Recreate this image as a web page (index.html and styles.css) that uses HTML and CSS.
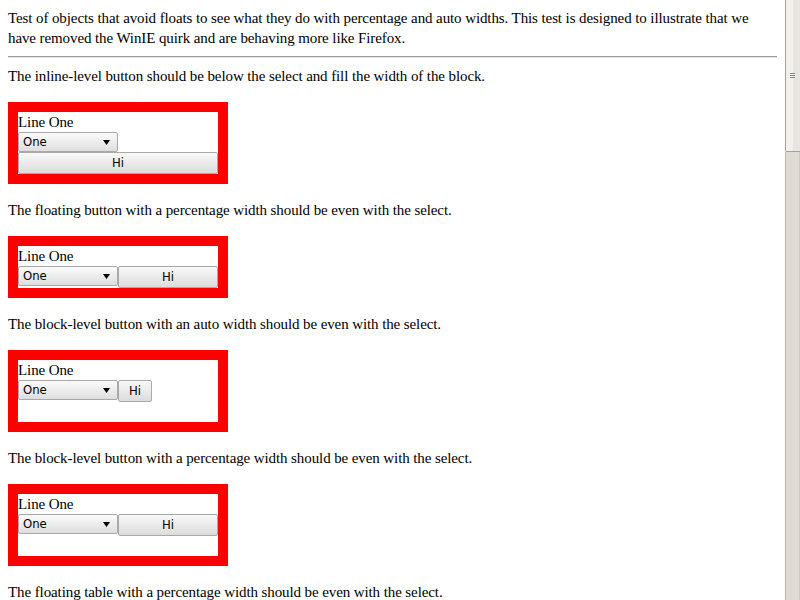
FILE: index.html
```
<!DOCTYPE html>
<html>
<head>
<meta charset="utf-8">
<link rel="stylesheet" href="styles.css">
</head>
<body>
<div class="page">
  <div class="content">
    <div class="text">Test of objects that avoid floats to see what they do with percentage and auto widths. This test is designed to illustrate that we have removed the WinIE quirk and are behaving more like Firefox.</div>
    <hr>
    <div class="text">The inline-level button should be below the select and fill the width of the block.</div>
    <div class="box">
      <div class="line">Line One</div>
      <div class="select"><span class="opt">One</span><svg class="arrow" width="7" height="5" viewBox="0 0 7 5"><polygon points="0,0 7,0 3.5,5" fill="#000"/></svg></div>
      <div class="btn full">Hi</div>
    </div>
    <div class="text">The floating button with a percentage width should be even with the select.</div>
    <div class="box">
      <div class="line">Line One</div>
      <div class="row">
        <div class="select"><span class="opt">One</span><svg class="arrow" width="7" height="5" viewBox="0 0 7 5"><polygon points="0,0 7,0 3.5,5" fill="#000"/></svg></div>
        <div class="btn half">Hi</div>
      </div>
    </div>
    <div class="text">The block-level button with an auto width should be even with the select.</div>
    <div class="box tall">
      <div class="line">Line One</div>
      <div class="row">
        <div class="select"><span class="opt">One</span><svg class="arrow" width="7" height="5" viewBox="0 0 7 5"><polygon points="0,0 7,0 3.5,5" fill="#000"/></svg></div>
        <div class="btn auto">Hi</div>
      </div>
    </div>
    <div class="text">The block-level button with a percentage width should be even with the select.</div>
    <div class="box tall">
      <div class="line">Line One</div>
      <div class="row">
        <div class="select"><span class="opt">One</span><svg class="arrow" width="7" height="5" viewBox="0 0 7 5"><polygon points="0,0 7,0 3.5,5" fill="#000"/></svg></div>
        <div class="btn half">Hi</div>
      </div>
    </div>
    <div class="text">The floating table with a percentage width should be even with the select.</div>
  </div>
  <div class="scrollbar">
    <div class="thumb"><div class="grip"><i></i><i></i><i></i></div></div>
    <div class="track"></div>
  </div>
</div>
</body>
</html>
```

FILE: styles.css
```
html, body {
  margin: 0;
  padding: 0;
  background: #fff;
}
.page {
  display: flex;
  width: 800px;
  height: 600px;
  overflow: hidden;
}
.content {
  flex: 1;
  min-width: 0;
  padding: 8px;
  font-family: "Liberation Serif", "Times New Roman", serif;
  font-size: 15px;
  letter-spacing: -0.1px;
  line-height: 20px;
  color: #000;
}
.text {
  line-height: 20px;
}
hr {
  margin: 8px 0;
  border: 0;
  border-top: 1px solid #9d9d9d;
  border-bottom: 1px solid #e4e4e4;
  height: 0;
}
.box {
  width: 200px;
  border: 10px solid #ff0000;
  margin: 16px 0;
  display: flex;
  flex-direction: column;
  align-items: flex-start;
}
.box.tall {
  height: 62px;
}
.line {
  height: 20px;
  line-height: 20px;
}
.row {
  display: flex;
  align-items: flex-start;
}
.select {
  box-sizing: border-box;
  width: 100px;
  height: 20px;
  border: 1px solid #a9a9a9;
  border-radius: 2px;
  background: linear-gradient(#fbfbfb, #dedede);
  display: flex;
  align-items: center;
  justify-content: space-between;
  padding: 0 7px 0 4px;
  font-family: "DejaVu Sans Condensed", "DejaVu Sans", sans-serif;
  font-stretch: condensed;
  font-size: 13px;
  letter-spacing: 0;
  line-height: 16px;
}
.arrow {
  display: block;
}
.btn {
  box-sizing: border-box;
  height: 22px;
  border: 1px solid #a9a9a9;
  border-radius: 2px;
  background: linear-gradient(#f8f8f8, #dcdcdc);
  font-family: "DejaVu Sans Condensed", "DejaVu Sans", sans-serif;
  font-stretch: condensed;
  font-size: 13px;
  letter-spacing: 0;
  line-height: 20px;
  text-align: center;
}
.btn.full {
  width: 200px;
}
.btn.half {
  width: 100px;
}
.btn.auto {
  padding: 0 10px;
}
.scrollbar {
  width: 15px;
  display: flex;
  flex-direction: column;
}
.thumb {
  box-sizing: border-box;
  height: 152px;
  border-left: 1px solid #a3a09c;
  border-bottom: 1px solid #a3a09c;
  border-radius: 0 0 0 2px;
  background: linear-gradient(to right, #f2f0ed 0, #f2f0ed 7px, #e8e5e1 7px);
  display: flex;
  align-items: center;
  justify-content: center;
}
.grip {
  display: flex;
  flex-direction: column;
  gap: 1px;
  margin-left: -2px;
}
.grip i {
  display: block;
  width: 5px;
  height: 1px;
  background: #8e8c89;
}
.track {
  flex: 1;
  box-sizing: border-box;
  border-left: 1px solid #bab4ac;
  border-right: 1px solid #cfc9c1;
  background: #e0dbd4;
}
```
